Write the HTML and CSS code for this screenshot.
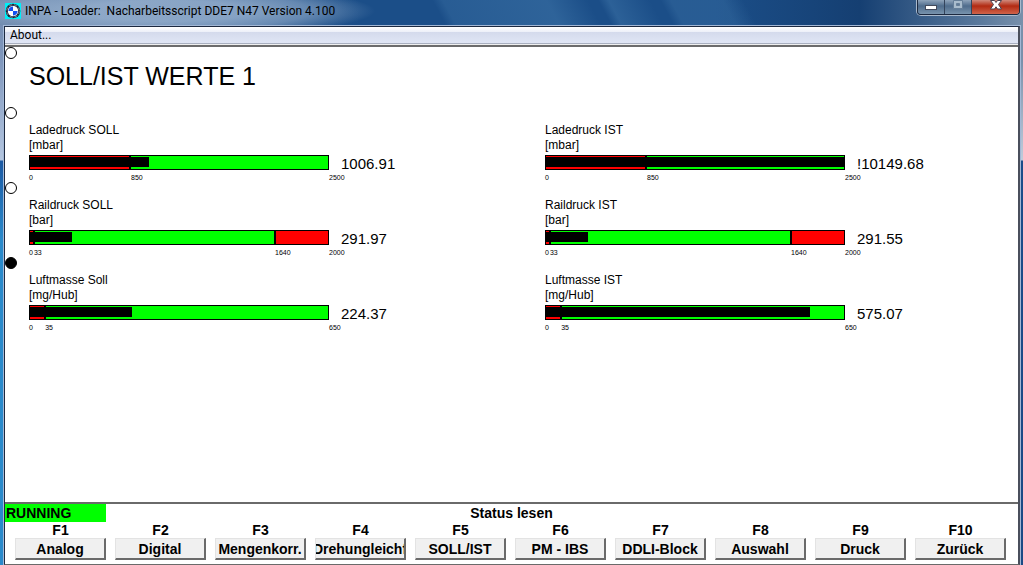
FILE: index.html
```
<!DOCTYPE html>
<html lang="de">
<head>
    <meta charset="UTF-8">
    <meta name="viewport" content="width=device-width, initial-scale=1.0">
    <title>INPA - Loader</title>
    <link rel="stylesheet" href="styles.css">
</head>
<body>
    <div class="window">
        <header class="titlebar">
            <svg class="logo" viewBox="0 0 16 16">
                <rect width="16" height="16" fill="#00f0f8"/>
                <circle cx="8" cy="8" r="7.3" fill="#1c2438"/>
                <circle cx="8" cy="8" r="6.3" fill="none" stroke="#a4acb8" stroke-width="0.8" stroke-dasharray="3 2"/>
                <circle cx="8" cy="8" r="5.2" fill="#fff"/>
                <path d="M8 8H3.4A4.6 4.6 0 0 1 8 3.4ZM8 8h4.6A4.6 4.6 0 0 1 8 12.6Z" fill="#1450f0"/>
            </svg>
            <span class="title">INPA - Loader:&nbsp; Nacharbeitsscript DDE7 N47 Version 4.100</span>
            <div class="controls">
                <button class="control" aria-label="Minimieren">
                    <svg width="12" height="6" viewBox="0 0 12 6"><rect x="0.5" y="0.5" width="11" height="4" fill="#fff" stroke="#434a5c"/></svg>
                </button>
                <button class="control" aria-label="Maximieren">
                    <svg width="12" height="10" viewBox="0 0 12 10"><path d="M1.5 0.5h9v8h-9ZM4.5 3.5h3v2h-3Z" fill="#a9bccd" fill-rule="evenodd" stroke="#667f99"/></svg>
                </button>
                <button class="control close" aria-label="Schließen">
                    <svg width="12" height="10" viewBox="0 0 12 10"><path d="M0.5 0.5h4L6 2.5 7.5 0.5h4L8.5 4.5l3 4.5h-4L6 6.8 4.5 9h-4l3-4.5Z" fill="#fff" stroke="#4a4250"/></svg>
                </button>
            </div>
        </header>

        <div class="client">
            <nav class="menu"><a href="#">About...</a></nav>

            <main class="screen">
                <section class="row head">
                    <input type="radio" name="line" aria-label="Titel">
                    <h1>SOLL/IST WERTE 1</h1>
                </section>

                <section class="row">
                    <input type="radio" name="line" aria-label="Ladedruck">
                    <div class="gauge">
                        <p>Ladedruck SOLL</p>
                        <p>[mbar]</p>
                        <div class="reading">
                            <div class="track">
                                <div class="zone bad" style="width: 34%"></div>
                                <div class="zone"></div>
                                <div class="fill" style="width: 40%"></div>
                            </div>
                            <span class="value">1006.91</span>
                        </div>
                        <div class="scale"><span style="width: 34%">0</span><span style="width: 66%">850</span><span>2500</span></div>
                    </div>
                    <div class="gauge">
                        <p>Ladedruck IST</p>
                        <p>[mbar]</p>
                        <div class="reading">
                            <div class="track">
                                <div class="zone bad" style="width: 34%"></div>
                                <div class="zone"></div>
                                <div class="fill" style="width: 100%"></div>
                            </div>
                            <span class="value">!10149.68</span>
                        </div>
                        <div class="scale"><span style="width: 34%">0</span><span style="width: 66%">850</span><span>2500</span></div>
                    </div>
                </section>

                <section class="row">
                    <input type="radio" name="line" aria-label="Raildruck">
                    <div class="gauge">
                        <p>Raildruck SOLL</p>
                        <p>[bar]</p>
                        <div class="reading">
                            <div class="track">
                                <div class="zone bad" style="width: 1.65%"></div>
                                <div class="zone"></div>
                                <div class="zone bad" style="width: 18%"></div>
                                <div class="fill" style="width: 14%"></div>
                            </div>
                            <span class="value">291.97</span>
                        </div>
                        <div class="scale"><span style="width: 1.65%">0</span><span style="width: 80.35%">33</span><span style="width: 18%">1640</span><span>2000</span></div>
                    </div>
                    <div class="gauge">
                        <p>Raildruck IST</p>
                        <p>[bar]</p>
                        <div class="reading">
                            <div class="track">
                                <div class="zone bad" style="width: 1.65%"></div>
                                <div class="zone"></div>
                                <div class="zone bad" style="width: 18%"></div>
                                <div class="fill" style="width: 14%"></div>
                            </div>
                            <span class="value">291.55</span>
                        </div>
                        <div class="scale"><span style="width: 1.65%">0</span><span style="width: 80.35%">33</span><span style="width: 18%">1640</span><span>2000</span></div>
                    </div>
                </section>

                <section class="row">
                    <input type="radio" name="line" aria-label="Luftmasse" checked>
                    <div class="gauge">
                        <p>Luftmasse Soll</p>
                        <p>[mg/Hub]</p>
                        <div class="reading">
                            <div class="track">
                                <div class="zone bad" style="width: 5.4%"></div>
                                <div class="zone"></div>
                                <div class="fill" style="width: 34.2%"></div>
                            </div>
                            <span class="value">224.37</span>
                        </div>
                        <div class="scale"><span style="width: 5.4%">0</span><span style="width: 94.6%">35</span><span>650</span></div>
                    </div>
                    <div class="gauge">
                        <p>Luftmasse IST</p>
                        <p>[mg/Hub]</p>
                        <div class="reading">
                            <div class="track">
                                <div class="zone bad" style="width: 5.4%"></div>
                                <div class="zone"></div>
                                <div class="fill" style="width: 88.5%"></div>
                            </div>
                            <span class="value">575.07</span>
                        </div>
                        <div class="scale"><span style="width: 5.4%">0</span><span style="width: 94.6%">35</span><span>650</span></div>
                    </div>
                </section>
            </main>

            <footer class="footer">
                <div class="status">
                    <span class="running">RUNNING</span>
                    <span class="message">Status lesen</span>
                </div>
                <div class="keys">
                    <div class="key"><label for="f1">F1</label><button id="f1">Analog</button></div>
                    <div class="key"><label for="f2">F2</label><button id="f2">Digital</button></div>
                    <div class="key"><label for="f3">F3</label><button id="f3">Mengenkorr.</button></div>
                    <div class="key"><label for="f4">F4</label><button id="f4">Drehungleichf</button></div>
                    <div class="key"><label for="f5">F5</label><button id="f5">SOLL/IST</button></div>
                    <div class="key"><label for="f6">F6</label><button id="f6">PM - IBS</button></div>
                    <div class="key"><label for="f7">F7</label><button id="f7">DDLI-Block</button></div>
                    <div class="key"><label for="f8">F8</label><button id="f8">Auswahl</button></div>
                    <div class="key"><label for="f9">F9</label><button id="f9">Druck</button></div>
                    <div class="key"><label for="f10">F10</label><button id="f10">Zurück</button></div>
                </div>
            </footer>
        </div>
    </div>
</body>
</html>
```
FILE: styles.css
```
* {
    box-sizing: border-box;
}
body {
    margin: 0;
    font-family: "Liberation Sans", Arial, sans-serif;
    color: #000;
}
h1, p {
    margin: 0;
    font-weight: normal;
}
.window {
    display: flex;
    flex-direction: column;
    min-height: 100vh;
    padding: 0 3px 0 4px;
    background:
        linear-gradient(#7890ab 0, #7890ab 60px, #c0cbda 160px, #1a4d8a 161px, #1a4a85 100%) right / 3px 100% no-repeat,
        linear-gradient(#7088ac 0, #7f97bd 60px, #b4c6e0 160px, #1c5aa4 161px, #2a8acb 240px, #2a8acb 100%);
}

/* title bar */
.titlebar {
    display: flex;
    align-items: flex-start;
    gap: 4px;
    height: 25px;
    margin: 0 -3px 0 -4px;
    padding: 0 3px 0 5px;
    background:
        radial-gradient(ellipse 210px 26px at 165px 11px, rgba(160, 184, 212, 0.75) 40%, rgba(160, 184, 212, 0.5) 70%, rgba(160, 184, 212, 0) 100%),
        linear-gradient(62deg, transparent 43%, rgba(70, 125, 175, 0.3) 44%, rgba(70, 125, 175, 0.45) 54%, transparent 58%, transparent 59%, rgba(70, 125, 175, 0.4) 60%, transparent 64%, transparent 65%, rgba(70, 125, 175, 0.3) 66%, rgba(70, 125, 175, 0.3) 71%, transparent 73%),
        linear-gradient(90deg, #6d88ac 0, #1b4e88 360px, #1b4e88 70%, #153f72 84%, #5b7a9d 96%, #7890ab 100%);
}
.logo {
    width: 16px;
    height: 16px;
    margin-top: 3px;
}
.title {
    flex: 1;
    font: 12px/22px Roboto, "Open Sans", sans-serif;
    white-space: nowrap;
}
.controls {
    display: flex;
    height: 15px;
    border: 1px solid #1c2940;
    border-top: 0;
    border-radius: 0 0 4px 4px;
    box-shadow: 0 0 0 1px #a9b9cc;
}
.control {
    display: flex;
    justify-content: center;
    align-items: flex-start;
    width: 27px;
    padding: 0;
    border: 0;
    border-right: 1px solid #33445c;
    background: linear-gradient(#8fa4bb, #4f6c8c 6px, #7893ad);
}
.control:first-child {
    padding-top: 5px;
    border-radius: 0 0 0 3px;
}
.close {
    width: 47px;
    border-right: 0;
    border-radius: 0 0 3px 0;
    background: linear-gradient(#d08a7c, #b22a12 6px, #d0634a);
}

/* client area */
.client {
    flex: 1;
    display: flex;
    flex-direction: column;
    border: 1px solid #1c2940;
    border-right: 2px solid #4a4f5c;
    border-bottom-color: #6a6a6a;
    outline: 1px solid #a3b8d6;
    background: #fff;
    margin-top: 1px;
}
.menu {
    height: 20px;
    padding: 0 5px;
    border-bottom: 2px solid #6c6c6c;
    background: linear-gradient(#fff, #eceff8 5px, #d4daec 5px, #e0e6f5 16px, #a9b0c0 16px, #a9b0c0 17px, #f0f0f0 17px);
    font: 12px/17px Roboto, "Open Sans", sans-serif;
}
.menu a {
    color: #000;
    text-decoration: none;
}
.screen {
    flex: 1;
}
.row {
    display: grid;
    grid-template-columns: 24px 12fr 11fr;
    min-height: 75px;
}
.head {
    min-height: 60px;
}
.row input {
    appearance: none;
    width: 12px;
    height: 12px;
    margin: 0;
    border: 1px solid #000;
    border-radius: 50%;
}
.row input:checked {
    background: #000;
}
h1 {
    padding-top: 14px;
    font-size: 25px;
    line-height: 30px;
    white-space: nowrap;
}
.gauge {
    padding-top: 16px;
    font-size: 12px;
    line-height: 15px;
}
.reading {
    display: flex;
    gap: 12px;
    height: 21px;
    padding-top: 2px;
}
.track {
    position: relative;
    display: flex;
    width: 300px;
    height: 15px;
    border: 1px solid #000;
}
.zone {
    flex: 1;
    background: #0f0;
}
.bad {
    flex: none;
    background: #f00;
}
.zone + .bad {
    border-left: 2px solid #000;
}
.bad:first-child {
    border-right: 2px solid #000;
}
.fill {
    position: absolute;
    top: 1px;
    left: 0;
    height: 10px;
    background: #000;
}
.value {
    font-size: 15px;
    line-height: 18px;
}
.scale {
    display: flex;
    width: 300px;
    font-size: 7px;
    line-height: 8px;
}
.scale span {
    flex: none;
}

/* function keys */
.footer {
    border-top: 2px solid #6a6a6a;
    font-size: 14px;
    font-weight: bold;
}
.status {
    display: grid;
    grid-template-columns: 101px 1fr 101px;
    line-height: 18px;
    text-align: center;
}
.running {
    padding-left: 1px;
    background: #0f0;
    text-align: left;
}
.keys {
    display: grid;
    grid-template-columns: repeat(10, minmax(0, 1fr));
    gap: 9px;
    padding: 0 12px 4px 10px;
}
.key {
    display: flex;
    flex-direction: column;
    line-height: 16px;
    text-align: center;
}
.key button {
    display: flex;
    justify-content: center;
    align-items: center;
    height: 22px;
    padding: 0;
    border: 1px solid #e3e3e3;
    border-right: 2px solid #6a6a6a;
    border-bottom: 2px solid #6a6a6a;
    background: #f0f0f0;
    color: #000;
    font: inherit;
    white-space: nowrap;
    overflow: hidden;
}
```
